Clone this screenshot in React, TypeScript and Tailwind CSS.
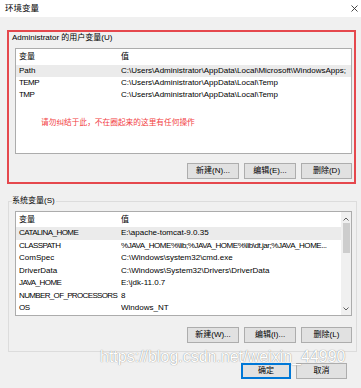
import React from "react";

const Btn = ({ label, w = "w-[52px]", primary = false }: { label: string; w?: string; primary?: boolean }) => (
  <div
    className={`${w} h-[16px] flex items-center justify-center ${
      primary ? "border-2 border-[#0078d7]" : "border border-[#adadad]"
    } bg-[#e1e1e1] text-[8px] leading-none`}
  >
    {label}
  </div>
);

const Row = ({
  k,
  v,
  sel = false,
  h = "h-[12px]",
  kt = "",
  vt = "",
}: {
  k: string;
  v: string;
  sel?: boolean;
  h?: string;
  kt?: string;
  vt?: string;
}) => (
  <div className={`flex items-center ${h} ${sel ? "bg-[#ebebeb]" : ""} whitespace-nowrap`}>
    <div className={`w-[105px] pl-[3px] shrink-0 overflow-hidden ${kt}`}>{k}</div>
    <div className={`flex-1 overflow-hidden ${vt}`}>{v}</div>
  </div>
);

const CAPS = "tracking-[-0.55px]";

export default function App() {
  return (
    <div className="relative w-[361px] h-[388px] bg-[#f0f0f0] overflow-hidden text-[8px] text-black font-['Liberation_Sans','Noto_Sans_CJK_SC',sans-serif]">
      {/* title bar */}
      <div className="h-[17px] bg-white flex items-center justify-between pl-[5px] pr-[2px]">
        <span className="leading-none text-[8.5px]">环境变量</span>
        <svg width="7" height="7" viewBox="0 0 7 7" className="mr-[1px]">
          <path d="M0.5 0.5 L6.5 6.5 M6.5 0.5 L0.5 6.5" stroke="#333" strokeWidth="0.9" />
        </svg>
      </div>

      {/* user variables, red box */}
      <div className="mt-[13px] ml-[7px] w-[349px] h-[154px] border-2 border-[#e5484d] flex flex-col">
        <div className="mt-[1px] ml-[3px] h-[10px] leading-[10px]">Administrator 的用户变量(U)</div>
        <div className="mt-[5px] ml-[6px] w-[337px] h-[106px] border border-[#acacac] bg-white flex flex-col">
          <div className="h-[16px] flex items-center">
            <div className="w-[105px] pl-[3px]">变量</div>
            <div>值</div>
          </div>
          <Row k="Path" v="C:\Users\Administrator\AppData\Local\Microsoft\WindowsApps;" sel />
          <Row k="TEMP" v="C:\Users\Administrator\AppData\Local\Temp" kt={CAPS} />
          <Row k="TMP" v="C:\Users\Administrator\AppData\Local\Temp" kt={CAPS} />
          <div className="mt-[18px] ml-[25px] text-[7.7px] leading-none text-[#f2403f]">
            请勿纠结于此，不在圈起来的这里有任何操作
          </div>
        </div>
        <div className="mt-[9px] mr-[2px] flex justify-end gap-[5px]">
          <Btn label="新建(N)..." />
          <Btn label="编辑(E)..." />
          <Btn label="删除(D)" w="w-[51px]" />
        </div>
      </div>

      {/* system variables group */}
      <div className="relative mt-[17px] ml-[8px] w-[349px] h-[151px] border border-[#dcdcdc] flex flex-col">
        <div className="absolute left-[3px] top-[-6px] h-[10px] leading-[10px] bg-[#f0f0f0] pr-[1px]">系统变量(S)</div>
        <div className="mt-[9px] ml-[6px] w-[337px] h-[105px] border border-[#acacac] bg-white flex">
          <div className="flex-1 flex flex-col overflow-hidden">
            <div className="h-[15px] shrink-0 flex items-center">
              <div className="w-[105px] pl-[3px]">变量</div>
              <div>值</div>
            </div>
            <Row h="h-[12.5px]" k="CATALINA_HOME" v="E:\apache-tomcat-9.0.35" sel kt={CAPS} />
            <Row
              h="h-[12.5px]"
              k="CLASSPATH"
              v="%JAVA_HOME%\lib;%JAVA_HOME%\lib\dt.jar;%JAVA_HOME..."
              kt={CAPS}
              vt="tracking-[-0.45px]"
            />
            <Row h="h-[12.5px]" k="ComSpec" v="C:\Windows\system32\cmd.exe" />
            <Row h="h-[12.5px]" k="DriverData" v="C:\Windows\System32\Drivers\DriverData" />
            <Row h="h-[12.5px]" k="JAVA_HOME" v="E:\jdk-11.0.7" kt={CAPS} />
            <Row h="h-[12.5px]" k="NUMBER_OF_PROCESSORS" v="8" kt="tracking-[-0.65px]" />
            <Row h="h-[12.5px]" k="OS" v="Windows_NT" kt={CAPS} />
          </div>
          <div className="w-[10px] shrink-0 flex flex-col items-center bg-[#f0f0f0]">
            <svg width="6" height="4" viewBox="0 0 6 4" className="mt-[5px]">
              <path d="M0.5 3.5 L3 1 L5.5 3.5" fill="none" stroke="#606060" strokeWidth="1" />
            </svg>
            <div className="mt-[2px] w-[7px] h-[30px] bg-[#cdcdcd]" />
            <div className="flex-1" />
            <svg width="6" height="4" viewBox="0 0 6 4" className="mb-[4px]">
              <path d="M0.5 0.5 L3 3 L5.5 0.5" fill="none" stroke="#606060" strokeWidth="1" />
            </svg>
          </div>
        </div>
        <div className="mt-[11px] ml-[178px] flex gap-[5px]">
          <Btn label="新建(W)..." />
          <Btn label="编辑(I)..." />
          <Btn label="删除(L)" w="w-[51px]" />
        </div>
      </div>

      {/* OK / Cancel */}
      <div className="mt-[11px] ml-[241px] flex gap-[5px]">
        <Btn label="确定" w="w-[50px]" primary />
        <Btn label="取消" w="w-[51px]" />
      </div>

      {/* watermark */}
      <div className="absolute left-[100px] top-[348px] text-[16px] leading-[18px] text-white whitespace-nowrap [text-shadow:0_0_1px_rgba(0,0,0,0.55)]">
        https://blog.csdn.net/weixin_44990
      </div>
    </div>
  );
}
